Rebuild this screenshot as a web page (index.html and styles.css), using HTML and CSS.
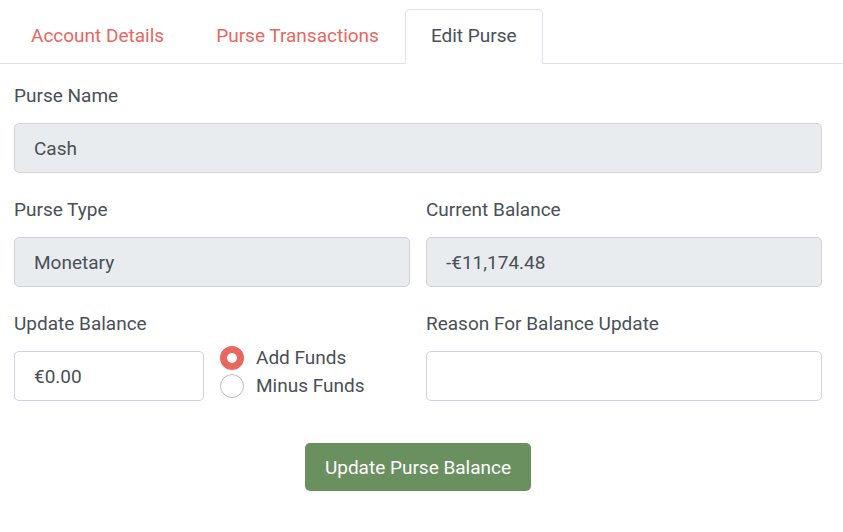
FILE: index.html
```html
<!DOCTYPE html>
<html>
<head>
<meta charset="utf-8">
<link rel="stylesheet" href="styles.css">
</head>
<body>
<ul class="tabs">
  <li class="tab"><a class="tab-link">Account Details</a></li>
  <li class="tab"><a class="tab-link">Purse Transactions</a></li>
  <li class="tab active"><a class="tab-link">Edit Purse</a></li>
</ul>
<form class="form">
  <div class="group">
    <label class="label">Purse Name</label>
    <div class="input readonly">Cash</div>
  </div>
  <div class="row">
    <div class="group">
      <label class="label">Purse Type</label>
      <div class="input readonly">Monetary</div>
    </div>
    <div class="group">
      <label class="label">Current Balance</label>
      <div class="input readonly">-€11,174.48</div>
    </div>
  </div>
  <div class="row">
    <div class="group">
      <label class="label">Update Balance</label>
      <div class="balance-line">
        <div class="input small">€0.00</div>
        <div class="radios">
          <div class="radio-item"><span class="radio checked"></span><span>Add Funds</span></div>
          <div class="radio-item"><span class="radio"></span><span>Minus Funds</span></div>
        </div>
      </div>
    </div>
    <div class="group">
      <label class="label">Reason For Balance Update</label>
      <div class="input"></div>
    </div>
  </div>
  <div class="actions">
    <button type="button" class="btn">Update Purse Balance</button>
  </div>
</form>
</body>
</html>
```
FILE: styles.css
```css
* { box-sizing: border-box; }
body {
  margin: 0;
  font-family: Roboto, "Noto Sans", sans-serif;
  font-size: 19px;
  color: #495057;
  background: #fff;
}
.tabs {
  list-style: none;
  margin: 0;
  padding: 9px 0 0 5px;
  display: flex;
  border-bottom: 1px solid #dee2e6;
}
.tab {
  margin-bottom: -1px;
}
.tab-link {
  display: block;
  padding: 13px 25px 15px;
  line-height: 25px;
  border: 1px solid transparent;
  border-radius: 5px 5px 0 0;
  color: #e8675f;
}
.tab.active .tab-link {
  color: #495057;
  background: #fff;
  border-color: #dee2e6 #dee2e6 #fff;
}
.form {
  padding: 20px 21px 0 14px;
}
.group {
  margin-bottom: 25px;
}
.label {
  display: block;
  line-height: 24px;
  margin-bottom: 15px;
}
.row {
  display: grid;
  grid-template-columns: 1fr 1fr;
  column-gap: 16px;
}
.input {
  height: 50px;
  border: 1px solid #ced4da;
  border-radius: 5px;
  padding: 0 19px;
  display: flex;
  align-items: center;
  background: #fff;
}
.input.readonly {
  background: #e9ecef;
}
.balance-line {
  display: flex;
  align-items: flex-start;
  gap: 16px;
}
.input.small {
  width: 190px;
}
.radios {
  display: flex;
  flex-direction: column;
  gap: 4px;
  margin-top: -5px;
}
.radio-item {
  display: flex;
  align-items: center;
  gap: 12px;
  line-height: 24px;
}
.radio {
  width: 24px;
  height: 24px;
  border-radius: 50%;
  border: 1px solid #b8c0c8;
  background: #fff;
}
.radio.checked {
  border: 7px solid #e8675f;
  background: #fff;
}
.actions {
  display: flex;
  justify-content: center;
  padding-top: 17px;
}
.btn {
  font: inherit;
  color: #fff;
  background: #6b9060;
  border: none;
  border-radius: 5px;
  height: 48px;
  padding: 0 20px;
}
```
